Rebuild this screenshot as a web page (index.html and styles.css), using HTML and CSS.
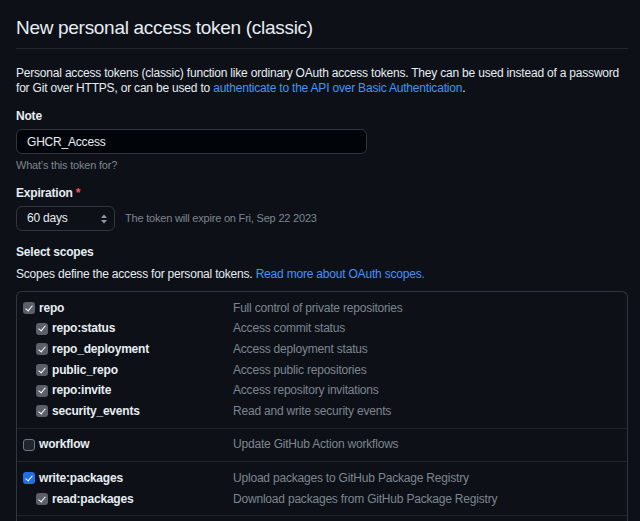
FILE: index.html
```html
<!DOCTYPE html>
<html lang="en">
<head>
<meta charset="utf-8">
<title>New personal access token (classic)</title>
<link rel="stylesheet" href="styles.css">
</head>
<body>
<main class="page">
  <h1 class="title">New personal access token (classic)</h1>
  <p class="intro">Personal access tokens (classic) function like ordinary OAuth access tokens. They can be used instead of a password for Git over HTTPS, or can be used to <a href="#">authenticate to the API over Basic Authentication</a>.</p>

  <div class="field">
    <label class="label" for="note">Note</label>
    <input class="input" id="note" type="text" value="GHCR_Access">
    <p class="hint">What’s this token for?</p>
  </div>

  <div class="field exp">
    <div class="label">Expiration <span class="req">*</span></div>
    <div class="exp-row">
      <div class="select">
        <span>60 days</span>
        <svg class="updown" width="8" height="12" viewBox="0 0 8 12"><path d="M4 1.5 7 5H1z" fill="#9198a1"/><path d="M4 10.5 1 7h6z" fill="#9198a1"/></svg>
      </div>
      <span class="exp-note">The token will expire on Fri, Sep 22 2023</span>
    </div>
  </div>

  <h3 class="section-title">Select scopes</h3>
  <p class="section-desc">Scopes define the access for personal tokens. <a href="#">Read more about OAuth scopes.</a></p>

  <div class="scopes">
    <div class="group">
      <div class="row parent"><span class="name"><span class="cb gray"></span>repo</span><span class="desc">Full control of private repositories</span></div>
      <div class="row child"><span class="name"><span class="cb gray"></span>repo:status</span><span class="desc">Access commit status</span></div>
      <div class="row child"><span class="name"><span class="cb gray"></span>repo_deployment</span><span class="desc">Access deployment status</span></div>
      <div class="row child"><span class="name"><span class="cb gray"></span>public_repo</span><span class="desc">Access public repositories</span></div>
      <div class="row child"><span class="name"><span class="cb gray"></span>repo:invite</span><span class="desc">Access repository invitations</span></div>
      <div class="row child"><span class="name"><span class="cb gray"></span>security_events</span><span class="desc">Read and write security events</span></div>
    </div>
    <div class="group">
      <div class="row parent"><span class="name"><span class="cb empty"></span>workflow</span><span class="desc">Update GitHub Action workflows</span></div>
    </div>
    <div class="group">
      <div class="row parent"><span class="name"><span class="cb blue"></span>write:packages</span><span class="desc">Upload packages to GitHub Package Registry</span></div>
      <div class="row child"><span class="name"><span class="cb gray"></span>read:packages</span><span class="desc">Download packages from GitHub Package Registry</span></div>
    </div>
    <div class="group tail"></div>
  </div>
</main>
</body>
</html>
```

FILE: styles.css
```css
html, body {
  margin: 0;
  padding: 0;
  background: #0d1117;
}

body {
  font-family: "Liberation Sans", Arial, sans-serif;
  color: #e6edf3;
  font-size: 12px;
  line-height: 15px;
  letter-spacing: -0.2px;
}

.page {
  padding: 14px 12px 0 16px;
}

.title {
  margin: 0;
  font-size: 19px;
  letter-spacing: -0.3px;
  line-height: 28px;
  font-weight: 400;
  padding-bottom: 6px;
  border-bottom: 1px solid #21262d;
}

a {
  color: #4493f8;
  text-decoration: none;
}

.intro {
  margin: 17px 0 0;
}

.field {
  margin-top: 13px;
}

.field.exp {
  margin-top: 14px;
}

.label {
  display: block;
  font-weight: 700;
  font-size: 12px;
  line-height: 15px;
}

.req {
  color: #f85149;
}

.input {
  display: block;
  box-sizing: border-box;
  margin-top: 5px;
  width: 351px;
  height: 25px;
  padding: 0 10px;
  background: #010409;
  border: 1px solid #30363d;
  border-radius: 6px;
  color: #e6edf3;
  font: 12px "Liberation Sans", Arial, sans-serif;
  letter-spacing: -0.2px;
  outline: none;
}

.hint {
  margin: 4px 0 0;
  font-size: 11px;
  line-height: 14px;
  color: #7d8590;
}

.exp-row {
  display: flex;
  align-items: center;
  gap: 10px;
  margin-top: 5px;
}

.select {
  box-sizing: border-box;
  width: 99px;
  height: 25px;
  display: flex;
  align-items: center;
  justify-content: space-between;
  padding: 0 6px 0 10px;
  background: #0d1117;
  border: 1px solid #30363d;
  border-radius: 6px;
  font-size: 12px;
}

.exp-note {
  font-size: 11px;
  color: #7d8590;
}

.section-title {
  margin: 14px 0 0;
  font-size: 12px;
  line-height: 15px;
  font-weight: 700;
}

.section-desc {
  margin: 7px 0 0;
}

.scopes {
  margin-top: 9px;
  border: 1px solid #30363d;
  border-bottom: 0;
  border-radius: 6px 6px 0 0;
}

.group {
  padding: 6px 0 6px 6px;
  border-top: 1px solid #21262d;
}

.group:first-child {
  border-top: 0;
}

.group.tail {
  padding: 4px 0;
}

.row {
  display: grid;
  grid-template-columns: 210px 1fr;
  height: 20.6px;
  align-items: center;
}

.name {
  display: flex;
  align-items: center;
  gap: 4px;
  font-weight: 700;
}

.child .name {
  padding-left: 13px;
}

.desc {
  color: #7d8590;
}

.cb {
  position: relative;
  box-sizing: border-box;
  width: 12px;
  height: 12px;
  border-radius: 3px;
  flex: none;
}

.cb.gray {
  background: #5b5f67;
}

.cb.blue {
  background: #1f6feb;
}

.cb.empty {
  background: #21262d;
  border: 1.5px solid #6e7681;
}

.cb.gray::after,
.cb.blue::after {
  content: "";
  position: absolute;
  left: 4px;
  top: 1.5px;
  width: 3px;
  height: 6px;
  border: solid #fff;
  border-width: 0 1.5px 1.5px 0;
  transform: rotate(40deg);
}
```
